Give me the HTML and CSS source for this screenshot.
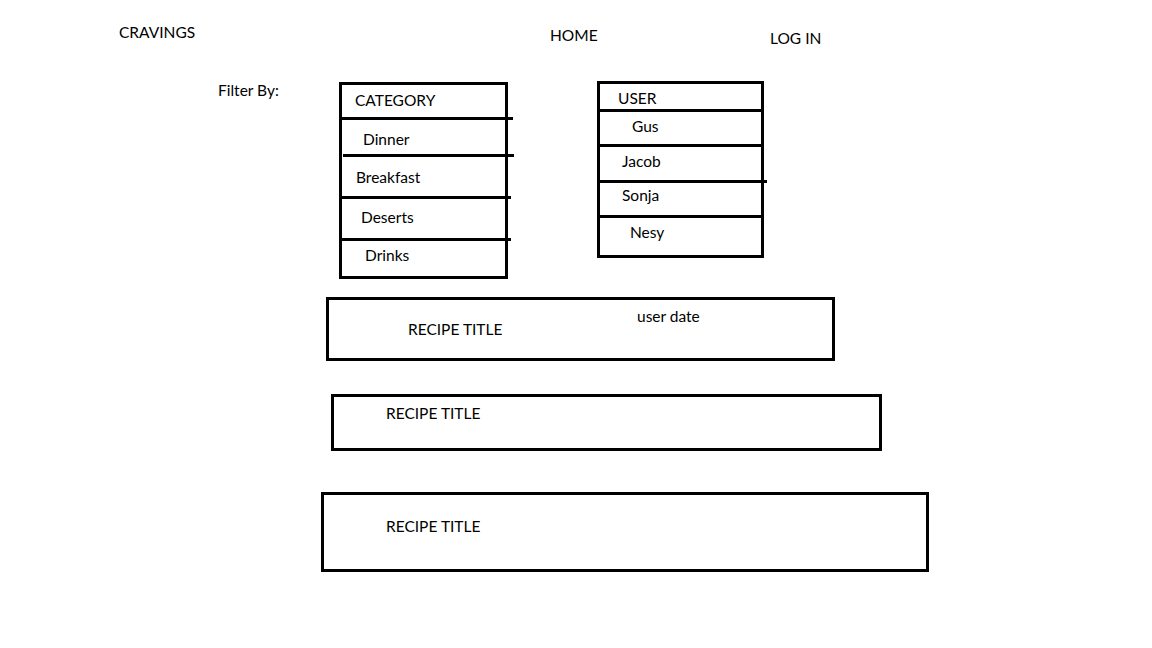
FILE: index.html
```html
<!DOCTYPE html>
<html>
<head>
  <title>Cravings</title>
  <link rel="stylesheet" href="styles.css">
</head>
<body>
<div class="header">
  <div class="brand">CRAVINGS</div>
  <div class="nav-home">HOME</div>
  <div class="nav-login">LOG IN</div>
</div>

<div class="filter-row">
  <div class="filter-label">Filter By:</div>

  <div class="filter-box category-box">
    <div class="cat-head">CATEGORY</div>
    <div class="cat-dinner">Dinner</div>
    <div class="cat-breakfast">Breakfast</div>
    <div class="cat-deserts">Deserts</div>
    <div class="cat-drinks">Drinks</div>
  </div>

  <div class="filter-box user-box">
    <div class="user-head">USER</div>
    <div class="user-gus">Gus</div>
    <div class="user-jacob">Jacob</div>
    <div class="user-sonja">Sonja</div>
    <div class="user-nesy">Nesy</div>
  </div>
</div>

<div class="recipe-list">
  <div class="recipe recipe-one">
    <div class="recipe-title">RECIPE TITLE</div>
    <div class="recipe-meta">user date</div>
  </div>
  <div class="recipe recipe-two">
    <div class="recipe-title">RECIPE TITLE</div>
  </div>
  <div class="recipe recipe-three">
    <div class="recipe-title">RECIPE TITLE</div>
  </div>
</div>
</body>
</html>
```

FILE: styles.css
```css
body {
  margin: 0;
  background-color: #fff;
  color: #000;
  font-family: "Lato", "Liberation Sans", sans-serif;
  font-size: 15.5px;
  line-height: 18px;
}

/* top bar */
.header {
  display: flex;
  align-items: flex-start;
  box-sizing: border-box;
  height: 81px;
  padding: 23px 0 0 119px;
}

.brand {
  width: 431px;
}

.nav-home {
  width: 220px;
  margin-top: 3px;
}

.nav-login {
  margin-top: 6px;
}

/* filters */
.filter-row {
  display: flex;
  align-items: flex-start;
  padding-left: 218px;
}

.filter-label {
  width: 121px;
}

.filter-box {
  border: 3px solid #000;
  box-sizing: border-box;
}

.filter-box div {
  box-sizing: border-box;
}

.category-box {
  width: 169px;
  margin-top: 1px;
}

.cat-head {
  height: 32px;
  padding: 6px 0 0 13px;
}

.cat-dinner {
  height: 37px;
  padding: 10px 0 0 21px;
  border-top: 3px solid #000;
  margin-right: -8px;
}

.cat-breakfast {
  height: 42px;
  padding: 11px 0 0 13px;
  border-top: 3px solid #000;
  margin: 0 -9px 0 1px;
}

.cat-deserts {
  height: 42px;
  padding: 9px 0 0 19px;
  border-top: 3px solid #000;
  margin-right: -6px;
}

.cat-drinks {
  height: 38px;
  padding: 5px 0 0 23px;
  border-top: 3px solid #000;
  margin-right: -6px;
}

.user-box {
  width: 167px;
  margin-left: 89px;
}

.user-head {
  height: 25px;
  padding: 5px 0 0 18px;
}

.user-gus {
  height: 35px;
  padding: 5px 0 0 32px;
  border-top: 3px solid #000;
}

.user-jacob {
  height: 36px;
  padding: 5px 0 0 22px;
  border-top: 3px solid #000;
}

.user-sonja {
  height: 35px;
  padding: 3px 0 0 22px;
  border-top: 3px solid #000;
  margin-right: -6px;
}

.user-nesy {
  height: 40px;
  padding: 5px 0 0 30px;
  border-top: 3px solid #000;
}

/* recipes */
.recipe-list {
  display: flex;
  flex-direction: column;
  align-items: flex-start;
  padding-top: 18px;
}

.recipe {
  display: flex;
  align-items: flex-start;
  box-sizing: border-box;
  border: 3px solid #000;
}

.recipe-one {
  width: 509px;
  height: 64px;
  margin-left: 326px;
  padding-left: 79px;
}

.recipe-one .recipe-title {
  width: 229px;
  margin-top: 20px;
}

.recipe-meta {
  margin-top: 7px;
}

.recipe-two {
  width: 551px;
  height: 57px;
  margin: 33px 0 0 331px;
  padding: 7px 0 0 52px;
}

.recipe-three {
  width: 608px;
  height: 80px;
  margin: 41px 0 0 321px;
  padding: 22px 0 0 62px;
}
```
